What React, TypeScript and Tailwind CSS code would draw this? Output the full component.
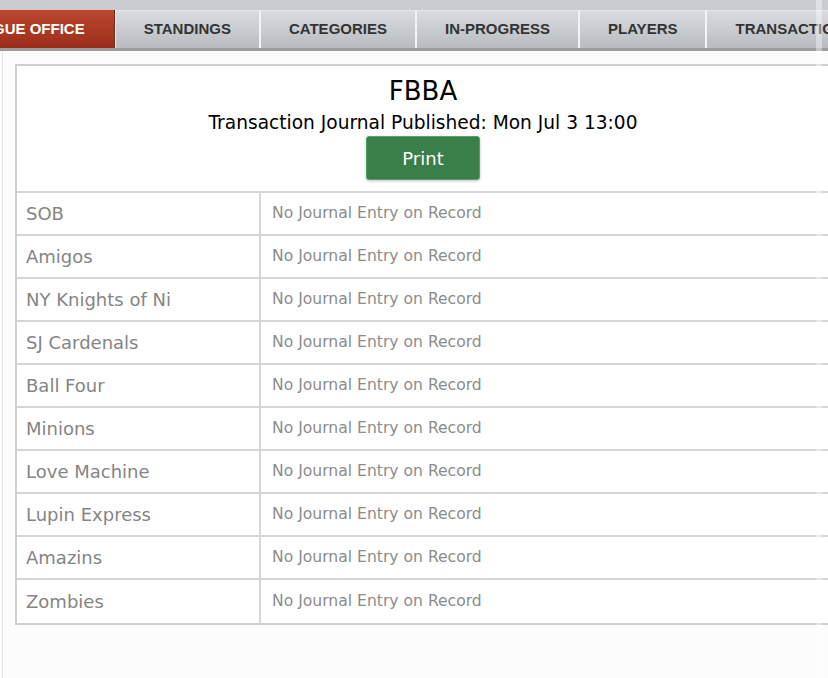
import React from "react"

const tabs = ["STANDINGS", "CATEGORIES", "IN-PROGRESS", "PLAYERS", "TRANSACTIONS"]

const teams = [
  "SOB",
  "Amigos",
  "NY Knights of Ni",
  "SJ Cardenals",
  "Ball Four",
  "Minions",
  "Love Machine",
  "Lupin Express",
  "Amazins",
  "Zombies",
]

export default function App() {
  return (
    <div className="relative w-[828px] h-[678px] overflow-hidden bg-[#fcfcfc] font-['DejaVu_Sans',sans-serif]">
      {/* Top nav */}
      <div className="h-[10px] bg-[#c8ccd0]" />
      <nav className="flex h-[41px] bg-[#c8ccd0] border-b-[3px] border-[#9c9c9c] font-['Liberation_Sans',Arial,sans-serif]">
        <div className="ml-[-66px] flex items-center shrink-0 h-full px-[29px] bg-gradient-to-b from-[#bb472e] to-[#9b2e19] border-r border-[#7a2414] text-white text-[15px] font-bold">
          LEAGUE OFFICE
        </div>
        {tabs.map((t) => (
          <div
            key={t}
            className="flex items-center justify-center shrink-0 h-full px-[28px] bg-gradient-to-b from-[#d9dcdf] to-[#b8bcc0] border-l border-[#f2f3f4] border-r border-[#9ea2a6] border-t border-t-[#e4e6e8] text-[#333] text-[15px] font-bold"
          >
            {t}
          </div>
        ))}
      </nav>

      {/* Content */}
      <div className="ml-[2px] h-full border-l border-[#e4e4e4] pl-[12px] pt-[13px]">
        <div className="w-[816px] border-2 border-[#cfcfcf] bg-white">
          {/* Header */}
          <div className="h-[127px] flex flex-col items-center pt-[9px] border-b-2 border-[#d6d6d6]">
            <h1 className="text-[26px] leading-[32px] text-black">FBBA</h1>
            <p className="text-[18.6px] leading-[26px] mt-[3px] text-black">
              Transaction Journal Published: Mon Jul 3 13:00
            </p>
            <button className="mt-[0px] w-[114px] h-[44px] rounded-[3px] bg-[#3a7e4a] border border-[#57a068] text-white text-[18px] shadow-[0_1px_3px_rgba(0,0,0,0.25)]">
              Print
            </button>
          </div>

          {/* Rows */}
          {teams.map((team, i) => (
            <div
              key={team}
              className={`flex h-[43px] ${i < teams.length - 1 ? "border-b-2 border-[#d6d6d6]" : ""}`}
            >
              <div className="w-[244px] shrink-0 flex items-center pl-[9px] border-r-2 border-[#d6d6d6] text-[18px] text-[#858585]">
                {team}
              </div>
              <div className="flex items-center pl-[11px] text-[15.6px] text-[#8c8c8c]">
                No Journal Entry on Record
              </div>
            </div>
          ))}
        </div>
      </div>

      {/* translucent scroll strip on the right */}
      <div className="pointer-events-none absolute top-0 left-[816px] w-[6px] h-full bg-white/40" />
    </div>
  )
}
